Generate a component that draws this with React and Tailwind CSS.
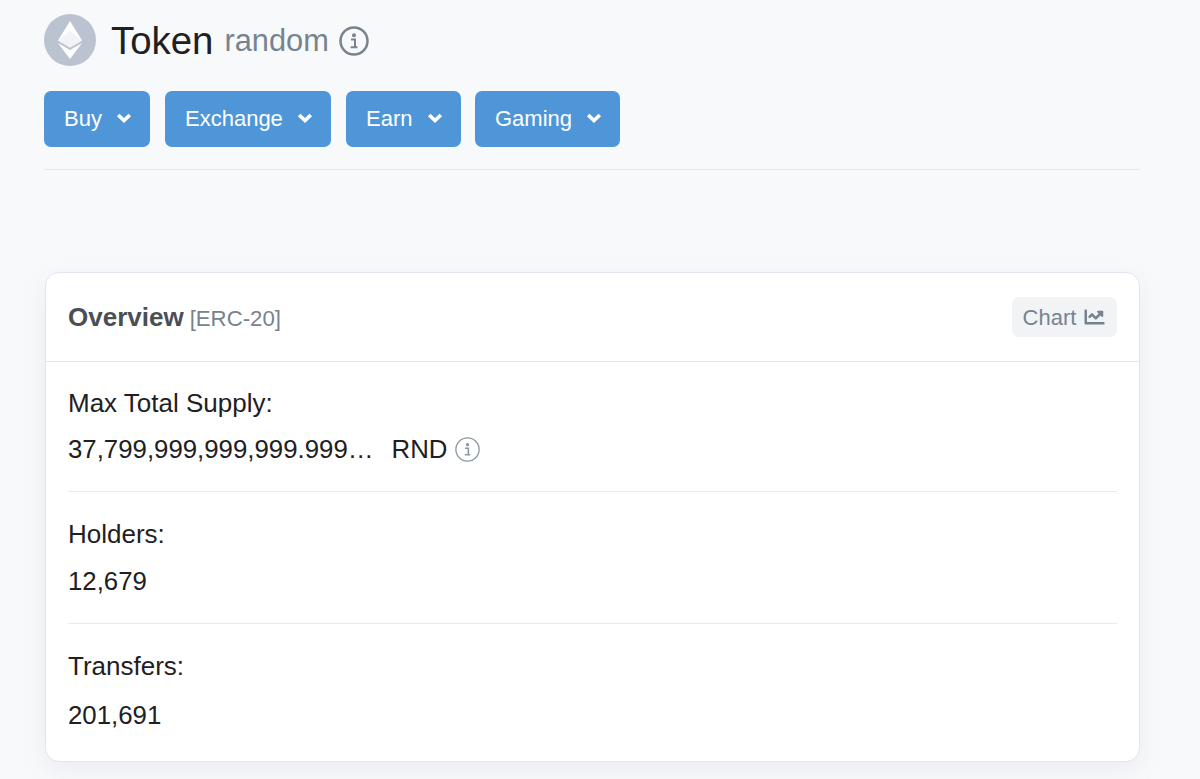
import React from 'react';
import { FaChartLine } from 'react-icons/fa';

const InfoIcon = ({ className, ring = 2 }) => (
  <svg viewBox="0 0 24 24" fill="none" className={className}>
    <circle cx="12" cy="12" r={12 - ring / 2 - 0.2} stroke="currentColor" strokeWidth={ring} />
    <circle cx="12" cy="7.4" r="1.6" fill="currentColor" />
    <path d="M9.6 10.8h3.2v6.2h1.7M9.3 17h5.4" stroke="currentColor" strokeWidth="1.6" />
  </svg>
);

const Chevron = () => (
  <svg viewBox="0 0 16 12" fill="none" className="w-[16px] h-[12px] mb-[3px]">
    <path d="M2.2 3L8 8.6L13.8 3" stroke="currentColor" strokeWidth="3.6" />
  </svg>
);

const EthLogo = () => (
  <div className="w-[52px] h-[52px] rounded-full bg-[#bcc3d0] flex items-center justify-center">
    <svg viewBox="0 0 24 38" className="w-[24px] h-[38px]">
      <path d="M12 0L0 19.5L12 26.5L24 19.5Z" fill="#ffffff" />
      <path d="M12 10L0 19.5L12 26.5L24 19.5Z" fill="#f2f3f6" />
      <path d="M0 22L12 38L24 22L12 29Z" fill="#ffffff" />
    </svg>
  </div>
);

const MenuButton = ({ label, width }) => (
  <button className={`${width} h-[56px] bg-[#4f96d8] rounded-[7px] text-white text-[22px] flex items-center justify-between pl-[20px] pr-[18px]`}>
    <span className="-mt-[1px]">{label}</span>
    <Chevron />
  </button>
);

const StatRow = ({ label, children, className, valueClass }) => (
  <div className={className}>
    <div className="text-[26px] leading-[36px] text-[#1e2022]">{label}</div>
    <div className={`${valueClass} text-[25.8px] leading-[36px] text-[#1e2022] flex items-center`}>{children}</div>
  </div>
);

const App = () => {
  return (
    <div className="h-[779px] overflow-hidden bg-[#f8f9fb] pt-[14px] pl-[44px] pr-[60px] font-['Liberation_Sans',Arial,sans-serif]">
      <div className="flex items-center h-[52px]">
        <EthLogo />
        <h1 className="ml-[15px] mt-[1px] text-[38.4px] text-[#1e2022]">Token</h1>
        <span className="ml-[11px] mt-[3px] text-[30.8px] text-[#77838f]">random</span>
        <InfoIcon className="ml-[10px] mt-[1px] w-[30px] h-[30px] text-[#77838f]" />
      </div>

      <div className="flex mt-[25px]">
        <MenuButton label="Buy" width="w-[106px] mr-[15px]" />
        <MenuButton label="Exchange" width="w-[166px] mr-[15px]" />
        <MenuButton label="Earn" width="w-[115px] mr-[14px]" />
        <MenuButton label="Gaming" width="w-[145px]" />
      </div>

      <div className="mt-[22px] border-t border-[#e4e7ec]" />

      <div className="mt-[102px] ml-px bg-white border border-[#e2e5ee] rounded-[14px] shadow-[0_8px_24px_rgba(140,152,164,0.12)]">
        <div className="h-[89px] border-b border-[#e4e7ee] pl-[22px] pr-[22px] flex items-center justify-between">
          <div className="flex items-baseline">
            <span className="text-[26px] font-bold text-[#4a4f55]">Overview</span>
            <span className="ml-[6px] text-[22.2px] text-[#77838f]">[ERC-20]</span>
          </div>
          <div className="w-[105px] h-[40px] rounded-[7px] bg-[#f1f3f5] text-[22px] text-[#77838f] flex items-center justify-center gap-[7px]">
            Chart
            <FaChartLine className="w-[23px] h-[20px]" />
          </div>
        </div>
        <div className="pl-[22px] pr-[22px]">
          <StatRow label="Max Total Supply:" className="pt-[23px] h-[130px] border-b border-[#e7eaf0]" valueClass="mt-[10px]">
            <span>37,799,999,999,999.999…</span>
            <span className="ml-[18px]">RND</span>
            <InfoIcon ring={1.3} className="ml-[8px] w-[25px] h-[25px] text-[#8c98a4]" />
          </StatRow>
          <StatRow label="Holders:" className="pt-[24px] h-[132px] border-b border-[#e7eaf0]" valueClass="mt-[11px]">12,679</StatRow>
          <StatRow label="Transfers:" className="pt-[24px] h-[137px]" valueClass="mt-[13px]">201,691</StatRow>
        </div>
      </div>
    </div>
  );
};

export default App;
